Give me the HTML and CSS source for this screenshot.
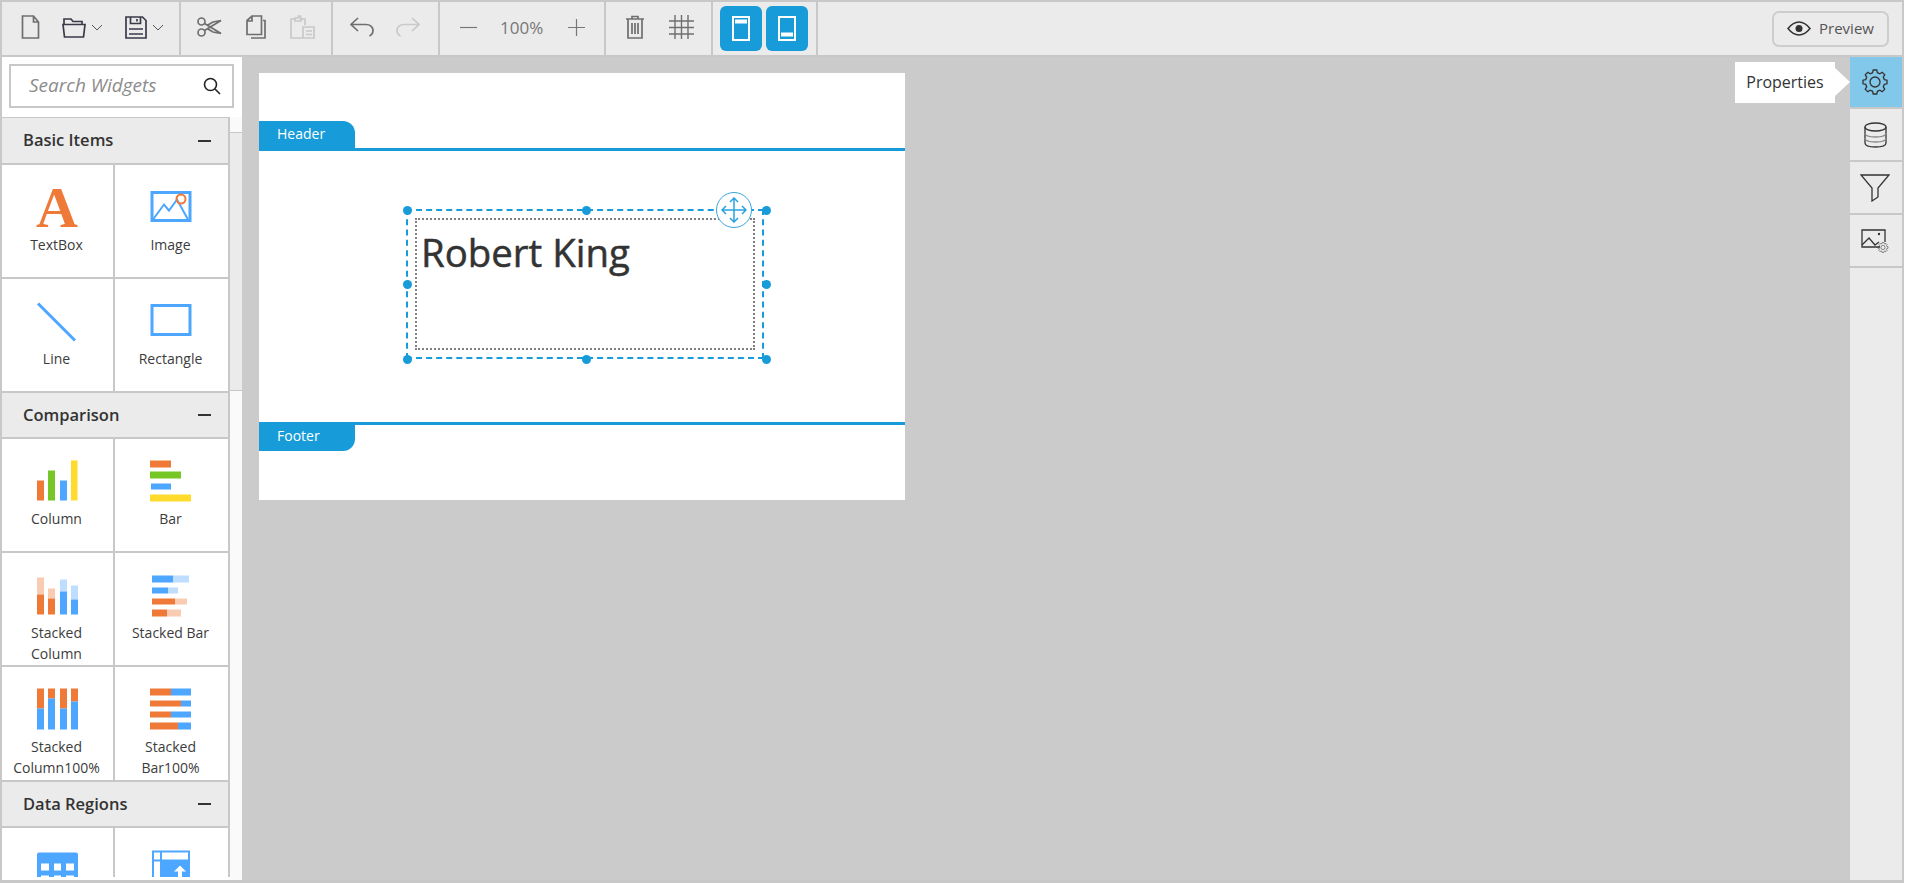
FILE: index.html
```html
<!DOCTYPE html>
<html lang="en">
<head>
<meta charset="utf-8">
<title>Report Designer</title>
<link rel="stylesheet" href="styles.css">
</head>
<body>
<svg class="defs" width="0" height="0" aria-hidden="true"><defs>
  <polygon id="gear" points="-2.4,-9.3 -1.8,-12 1.8,-12 2.4,-9.3 4.88,-8.27 7.21,-9.76 9.76,-7.21 8.27,-4.88 9.3,-2.4 12,-1.8 12,1.8 9.3,2.4 8.27,4.88 9.76,7.21 7.21,9.76 4.88,8.27 2.4,9.3 1.8,12 -1.8,12 -2.4,9.3 -4.88,8.27 -7.21,9.76 -9.76,7.21 -8.27,4.88 -9.3,2.4 -12,1.8 -12,-1.8 -9.3,-2.4 -8.27,-4.88 -9.76,-7.21 -7.21,-9.76 -4.88,-8.27"/>
</defs></svg>
<div class="app">
  <header class="toolbar">
    <div class="group g1">
      <svg class="tool" width="19" height="24" viewBox="0 0 19 24"><path d="M1.500 1h11l5 6v16h-16zM12.500 1v6h5"/></svg>
      <svg class="tool dark" width="24" height="21" viewBox="0 0 24 21"><path d="M2 7V2h7l2 2.500h9V7M1 7.500h22L21.500 20h-19z"/></svg>
      <svg class="caret" width="12" height="7" viewBox="0 0 12 7"><path d="M1 1l5 5 5-5"/></svg>
      <svg class="tool dark" width="22" height="23" viewBox="0 0 22 23"><path d="M1 1h16.500l3.500 3.500V22H1zM5.500 1v6.500h10V1M12 3v2.500M4 13h14M4 18h14"/></svg>
      <svg class="caret" width="12" height="7" viewBox="0 0 12 7"><path d="M1 1l5 5 5-5"/></svg>
    </div>
    <div class="group g2">
      <svg class="tool" width="25" height="20" viewBox="0 0 25 20"><circle cx="4.500" cy="4.500" r="3.500"/><circle cx="4.500" cy="15.500" r="3.500"/><path d="M7.500 6.500L24 16.500l-8-1.500-6-3.500M7.500 13.500L24 3.500l-8 1.500-6 3.500"/></svg>
      <svg class="tool" width="20" height="24" viewBox="0 0 20 24"><path d="M5 23h14V5.500h-2M1 19.500V5.500L6 1h9.500v18.500zM6 1v5H1"/></svg>
      <svg class="tool faint" width="25" height="24" viewBox="0 0 25 24"><path d="M6 4H1v19h12M15 10V4h-5M6 3h2.500V1h2V3H11v3H5V3zM13 12h11v11H13zM16 16h6M16 19.500h6"/></svg>
    </div>
    <div class="group g3">
      <svg class="tool" width="24" height="20" viewBox="0 0 24 20"><path d="M8 1L1 7.500l7 6.500M1 7.500h15c4 0 7 2.500 7 6 0 2.500-1.500 4.500-3.500 5.500"/></svg>
      <svg class="tool faint" width="24" height="20" viewBox="0 0 24 20"><path d="M16 1l7 6.500-7 6.500M23 7.500H8c-4 0-7 2.500-7 6 0 2.500 1.500 4.500 3.500 5.500"/></svg>
    </div>
    <div class="group g4">
      <svg class="zoom-icon" width="17" height="17" viewBox="0 0 17 17"><path d="M0 8.500h17"/></svg>
      <span class="zoom-value">100%</span>
      <svg class="zoom-icon" width="17" height="17" viewBox="0 0 17 17"><path d="M0 8.500h17M8.500 0v17"/></svg>
    </div>
    <div class="group g5">
      <svg class="tool" width="18" height="24" viewBox="0 0 18 24"><path d="M0 4h18M6 4V1.500h6V4M2 4v19h14V4M6 8v11M9 8v11M12 8v11"/></svg>
      <svg class="tool grid" width="25" height="24" viewBox="0 0 25 24"><path d="M6 0v24M12.500 0v24M19 0v24M0 6h25M0 12.500h25M0 19h25"/></svg>
    </div>
    <div class="group g6">
      <button class="band-btn"><svg width="18" height="25" viewBox="0 0 18 25"><rect x="1" y="1" width="16" height="23"/><path class="bar" d="M3 5.500h12"/></svg></button>
      <button class="band-btn"><svg width="18" height="25" viewBox="0 0 18 25"><rect x="1" y="1" width="16" height="23"/><path class="bar" d="M3 18.500h12"/></svg></button>
    </div>
    <div class="toolbar-end">
      <button class="preview"><svg width="24" height="15" viewBox="0 0 24 15"><path d="M1 7.500C5 2.500 8 1 12 1s7 1.500 11 6.500C19 12.500 16 14 12 14S5 12.500 1 7.500z"/><circle cx="12" cy="7.500" r="3.500"/></svg><span class="preview-text">Preview</span></button>
    </div>
  </header>

  <div class="workspace">
    <aside class="sidebar">
      <div class="search-wrap">
        <div class="search">
          <span class="search-text">Search Widgets</span>
          <svg width="18" height="18" viewBox="0 0 18 18"><circle cx="7.500" cy="7.500" r="6"/><path d="M12 12l5 5"/></svg>
        </div>
      </div>
      <div class="widget-area">
        <div class="widget-list">
          <section>
            <h2 class="acc-head"><span class="acc-title">Basic Items</span><span class="dash"></span></h2>
            <div class="cells">
              <div class="cell"><svg class="icon" viewBox="0 0 42 40"><text class="glyph-a" x="21" y="40" text-anchor="middle">A</text></svg><div class="label">TextBox</div></div>
              <div class="cell"><svg class="icon" viewBox="0 0 42 40"><rect class="ol" x="2" y="6" width="38" height="28"/><path class="ol thin" d="M3 33l11-15 5 6 8-11 11 20"/><circle class="oc" cx="31" cy="12.500" r="4.500"/></svg><div class="label">Image</div></div>
              <div class="cell"><svg class="icon" viewBox="0 0 42 40"><path class="ol" d="M2 3l37 37"/></svg><div class="label">Line</div></div>
              <div class="cell"><svg class="icon" viewBox="0 0 42 40"><rect class="ol" x="2" y="5" width="38" height="29"/></svg><div class="label">Rectangle</div></div>
            </div>
          </section>
          <section>
            <h2 class="acc-head"><span class="acc-title">Comparison</span><span class="dash"></span></h2>
            <div class="cells">
              <div class="cell"><svg class="icon" viewBox="0 0 42 40"><rect class="f-o" x="1" y="20" width="7" height="20"/><rect class="f-g" x="12" y="10" width="7" height="30"/><rect class="f-b" x="24" y="20" width="7" height="20"/><rect class="f-y" x="35" y="0" width="6.500" height="40"/></svg><div class="label">Column</div></div>
              <div class="cell"><svg class="icon" viewBox="0 0 42 40"><rect class="f-o" x="0" y="0" width="21" height="7"/><rect class="f-g" x="0" y="11" width="31" height="7"/><rect class="f-b" x="1" y="23" width="20" height="6"/><rect class="f-y" x="0" y="34" width="41" height="7"/></svg><div class="label">Bar</div></div>
              <div class="cell"><svg class="icon" viewBox="0 0 42 40"><rect class="f-ol" x="1" y="3" width="7" height="17"/><rect class="f-o" x="1" y="20" width="7" height="20"/><rect class="f-ol" x="12" y="14" width="7" height="10"/><rect class="f-o" x="12" y="24" width="7" height="16"/><rect class="f-bl" x="24" y="5" width="7" height="12"/><rect class="f-b" x="24" y="17" width="7" height="23"/><rect class="f-bl" x="35" y="11" width="7" height="14"/><rect class="f-b" x="35" y="25" width="7" height="15"/></svg><div class="label">Stacked Column</div></div>
              <div class="cell"><svg class="icon" viewBox="0 0 42 40"><rect class="f-b" x="2" y="1" width="21" height="7"/><rect class="f-bl" x="23" y="1" width="16" height="7"/><rect class="f-b" x="2" y="13" width="16" height="6"/><rect class="f-bl" x="18" y="13" width="10" height="6"/><rect class="f-o" x="2" y="24" width="23" height="6"/><rect class="f-ol" x="25" y="24" width="12" height="6"/><rect class="f-o" x="2" y="35" width="15" height="7"/><rect class="f-ol" x="17" y="35" width="14" height="7"/></svg><div class="label">Stacked Bar</div></div>
              <div class="cell tall"><svg class="icon" viewBox="0 0 42 40"><rect class="f-o" x="1" y="0" width="7" height="20"/><rect class="f-b" x="1" y="20" width="7" height="21"/><rect class="f-o" x="12" y="0" width="7" height="10"/><rect class="f-b" x="12" y="10" width="7" height="31"/><rect class="f-o" x="24" y="0" width="7" height="20"/><rect class="f-b" x="24" y="20" width="7" height="21"/><rect class="f-o" x="35" y="0" width="7" height="13"/><rect class="f-b" x="35" y="13" width="7" height="28"/></svg><div class="label">Stacked Column100%</div></div>
              <div class="cell tall"><svg class="icon" viewBox="0 0 42 40"><rect class="f-o" x="0" y="0" width="21" height="7"/><rect class="f-b" x="21" y="0" width="20" height="7"/><rect class="f-o" x="0" y="12" width="31" height="6"/><rect class="f-b" x="31" y="12" width="10" height="6"/><rect class="f-o" x="0" y="23" width="21" height="6"/><rect class="f-b" x="21" y="23" width="20" height="6"/><rect class="f-o" x="0" y="34" width="28" height="7"/><rect class="f-b" x="28" y="34" width="13" height="7"/></svg><div class="label">Stacked Bar100%</div></div>
            </div>
          </section>
          <section>
            <h2 class="acc-head"><span class="acc-title">Data Regions</span><span class="dash"></span></h2>
            <div class="cells">
              <div class="cell"><svg class="icon" viewBox="0 0 42 40"><rect class="f-b" x="1" y="3" width="41" height="37" rx="2"/><path class="w" d="M5 14h8v7H5zM18 14h7v7h-7zM30 14h8v7h-8zM5 26h8v7H5zM18 26h7v7h-7zM30 26h8v7h-8z"/></svg></div>
              <div class="cell"><svg class="icon" viewBox="0 0 42 40"><rect class="f-b" x="2" y="1" width="38" height="39"/><path class="w" d="M4 3h6v7H4zM12 3h26v7H12zM4 12h6v28H4zM30 16l6 6h-4v8h-4v-8h-4z"/></svg></div>
            </div>
          </section>
        </div>
        <div class="scroll-track"><div class="scroll-thumb"></div></div>
      </div>
    </aside>

    <main class="canvas">
      <div class="page">
        <div class="band-head"><div class="tab tab-top">Header</div></div>
        <div class="band-body">
          <div class="selection">
            <div class="textbox">Robert King</div>
            <span class="handle h-tl"></span><span class="handle h-tc"></span><span class="handle h-tr"></span>
            <span class="handle h-ml"></span><span class="handle h-mr"></span>
            <span class="handle h-bl"></span><span class="handle h-bc"></span><span class="handle h-br"></span>
            <div class="mover"><svg width="26" height="26" viewBox="0 0 26 26"><path d="M13 1v24M1 13h24M9 5l4-4 4 4M9 21l4 4 4-4M5 9l-4 4 4 4M21 9l4 4-4 4"/></svg></div>
          </div>
        </div>
        <div class="band-foot"><div class="tab tab-bottom">Footer</div></div>
      </div>
    </main>

    <nav class="rail">
      <div class="rail-item active"><svg width="26" height="26" viewBox="-13 -13 26 26"><use href="#gear"/><circle r="5"/></svg>
        <div class="tip">Properties</div></div>
      <div class="rail-item"><svg width="23" height="26" viewBox="0 0 23 26"><ellipse cx="11.500" cy="5" rx="10.500" ry="4"/><path d="M1 5v16c0 2.500 4.500 4 10.500 4S22 23.500 22 21V5"/><path class="soft" d="M1 11c0 2.500 4.500 4 10.500 4S22 13.500 22 11M1 16c0 2.500 4.500 4 10.500 4S22 18.500 22 16"/></svg></div>
      <div class="rail-item"><svg width="30" height="28" viewBox="0 0 30 28"><path d="M1 1h28L18 14v9l-6 4V14z"/></svg></div>
      <div class="rail-item"><svg width="28" height="24" viewBox="0 0 28 24"><path d="M19 18H1V1h23v12"/><path d="M1 16l7-7 6 7 4-3"/><circle class="dot" cx="18" cy="5" r="1.200"/><g transform="translate(22 18.500) scale(.42)"><use href="#gear"/><circle r="5"/></g></svg></div>
      <div class="rail-rest"></div>
    </nav>
  </div>
</div>
</body>
</html>
```
FILE: styles.css
```css
* { box-sizing: border-box; }
html, body { margin: 0; height: 100%; overflow: hidden; }
body { font-family: "Open Sans", "Noto Sans", sans-serif; color: #333; background: #fff; }
.defs { position: absolute; }
.app { height: 883px; width: 1904px; border: solid #c8c8c8; border-width: 2px 2px 3px; display: flex; flex-direction: column; }

/* Toolbar */
.toolbar { height: 55px; flex: none; display: flex; background: #ebebeb; border-bottom: 2px solid #c8c8c8; }
.group { display: flex; align-items: center; flex: none; padding-bottom: 3px; border-right: 2px solid #c8c8c8; }
.group svg { flex: none; fill: none; stroke: #6f6f6f; stroke-width: 1.7; }
.g1 { width: 179px; padding-left: 19px; }
.g2 { width: 152px; padding-left: 16px; }
.g3 { width: 107px; padding-left: 17px; }
.g4 { width: 166px; padding-left: 20px; }
.g5 { width: 107px; padding-left: 20px; }
.g6 { width: 105px; padding: 0 0 0 7px; gap: 4px; }
.tool + .tool { margin-left: 24px; }
.g1 .tool + .tool, .g1 .caret + .tool { margin-left: 22px; }
.g3 .tool + .tool { margin-left: 22px; }
.g5 .tool + .tool { margin-left: 25px; }
.group .dark { stroke: #3a3a4a; }
.group .faint { stroke: #c9c9c9; }
.group .grid { stroke-width: 1.4; }
.group .caret { margin-left: 5px; stroke: #555; stroke-width: 1; }
.group .zoom-icon { stroke: #777; stroke-width: 1.2; }
.zoom-value { width: 44px; margin: 0 24px 0 23px; font-size: 17px; color: #777; white-space: nowrap; }
.band-btn { width: 42px; height: 45px; padding: 0; border: 0; border-radius: 6px; background: #179cd9; display: flex; align-items: center; justify-content: center; }
.band-btn svg { stroke: #fff; stroke-width: 2; }
.band-btn svg .bar { stroke-width: 4; }
.toolbar-end { flex: 1; display: flex; justify-content: flex-end; align-items: center; padding-right: 13px; }
.preview { width: 117px; height: 36px; padding: 0; border: 2px solid #cdcdcd; border-radius: 7px; background: #ebebeb; display: flex; align-items: center; justify-content: center; gap: 8px; font: 15px "Open Sans", sans-serif; color: #555; }
.preview svg { fill: none; stroke: #333; stroke-width: 1.5; }
.preview svg circle { fill: #333; stroke: none; }
.preview-text { padding-bottom: 2px; }

/* Workspace */
.workspace { flex: 1; min-height: 0; display: flex; }

/* Sidebar */
.sidebar { width: 240px; flex: none; display: flex; flex-direction: column; background: #fff; }
.search-wrap { height: 60px; flex: none; padding: 7px 8px 9px 7px; }
.search { height: 44px; border: 2px solid #c8c8c8; display: flex; align-items: center; justify-content: space-between; padding: 0 11px 0 18px; }
.search-text { font-size: 19px; font-style: italic; color: #8c8c8c; padding-bottom: 3px; }
.search svg { fill: none; stroke: #222; stroke-width: 1.6; }
.widget-area { flex: 1; min-height: 0; display: flex; }
.widget-list { width: 228px; flex: none; overflow: hidden; margin-bottom: 3px; }
.acc-head { height: 46px; margin: 0; padding: 0 17px 0 21px; display: flex; align-items: center; justify-content: space-between; background: #ebebeb; border: solid #c8c8c8; border-width: 0 2px 2px 0; font-size: 16.500px; font-weight: 600; color: #333; }
section:first-child .acc-head { height: 48px; border-top-width: 1px; }
.acc-title { padding-bottom: 2px; }
.dash { width: 13px; height: 2px; background: #333; }
.cells { display: grid; grid-template-columns: 111px 113px; column-gap: 2px; row-gap: 2px; background: #c8c8c8; border-right: 2px solid #c8c8c8; padding-bottom: 2px; }
section:last-child .cells { padding-bottom: 0; }
.cell { height: 112px; background: #fff; padding: 21px 7px 0 5px; overflow: hidden; display: flex; flex-direction: column; align-items: center; }
.cell.tall { height: 113px; }
.icon { width: 42px; height: 41px; flex: none; overflow: visible; }
.glyph-a { font: bold 58px "Liberation Serif", serif; fill: #ef7a38; }
.label { margin-top: 7px; font-size: 14px; line-height: 21px; text-align: center; color: #3c3c3c; }
.ol { fill: none; stroke: #4da6ff; stroke-width: 3; }
.ol.thin { stroke-width: 2; }
.oc { fill: none; stroke: #ef7a38; stroke-width: 2; }
.f-o { fill: #ef7a38; } .f-g { fill: #76c725; } .f-b { fill: #4da6ff; } .f-y { fill: #ffdb2d; }
.f-ol { fill: #f8cbb2; } .f-bl { fill: #bfddff; }
.w { fill: #fff; }
.scroll-track { width: 12px; flex: none; background: #fafafa; }
.scroll-thumb { height: 259px; margin-top: 15px; background: #ebebeb; border-top: 1px solid #c8c8c8; border-bottom: 1px solid #c8c8c8; }

/* Canvas */
.canvas { flex: 1; min-width: 0; background: #cbcbcb; padding: 16px 0 0 17px; }
.page { width: 646px; height: 427px; background: #fff; }
.band-head { height: 78px; padding-top: 48px; border-bottom: 3px solid #179cd9; }
.band-body { height: 271px; position: relative; }
.band-foot { height: 78px; border-top: 3px solid #179cd9; }
.tab { width: 96px; height: 27px; padding-left: 18px; background: #179cd9; color: #fff; font-size: 14px; line-height: 26px; }
.tab-top { border-top-right-radius: 12px; }
.tab-bottom { height: 26px; line-height: 21px; border-bottom-right-radius: 12px; }
.selection { position: absolute; left: 147px; top: 58px; width: 358px; height: 150px; padding: 7px; border: 2px dashed #179cd9; }
.textbox { height: 100%; padding: 8px 0 0 4px; border: 2px dotted #808080; font-size: 38.400px; line-height: 48px; color: #333; -webkit-text-stroke: 0.5px #333; }
.handle { position: absolute; width: 9px; height: 9px; border-radius: 50%; background: #179cd9; }
.h-tl { left: -5px; top: -5px; } .h-tc { left: 174px; top: -5px; } .h-tr { left: 354px; top: -5px; }
.h-ml { left: -5px; top: 69px; } .h-mr { left: 354px; top: 69px; }
.h-bl { left: -5px; top: 144px; } .h-bc { left: 174px; top: 144px; } .h-br { left: 354px; top: 144px; }
.mover { position: absolute; left: 308px; top: -19px; width: 36px; height: 36px; border: 1.5px solid #3aa3e0; border-radius: 50%; background: #fff; display: flex; align-items: center; justify-content: center; }
.mover svg { fill: none; stroke: #29a3e0; stroke-width: 1.5; }

/* Right rail */
.rail { width: 52px; flex: none; display: flex; flex-direction: column; gap: 2px; background: #c8c8c8; }
.rail-item { height: 51px; flex: none; position: relative; display: flex; align-items: center; justify-content: center; padding-right: 2px; background: #ebebeb; }
.rail-item svg { fill: none; stroke: #333; stroke-width: 1.3; }
.rail-item .soft { stroke: #888; }
.rail-item .dot { fill: #333; stroke: none; }
.rail-item.active { height: 50px; background: #82c8ea; }
.rail-rest { flex: 1; background: #ebebeb; }
.tip { position: absolute; right: 67px; top: 5px; width: 100px; height: 41px; background: #fff; font-size: 16px; line-height: 41px; text-align: center; color: #333; }
.tip::after { content: ""; position: absolute; left: 100%; top: 6px; border-style: solid; border-width: 14px 0 14px 15px; border-color: transparent transparent transparent #fff; }
```
